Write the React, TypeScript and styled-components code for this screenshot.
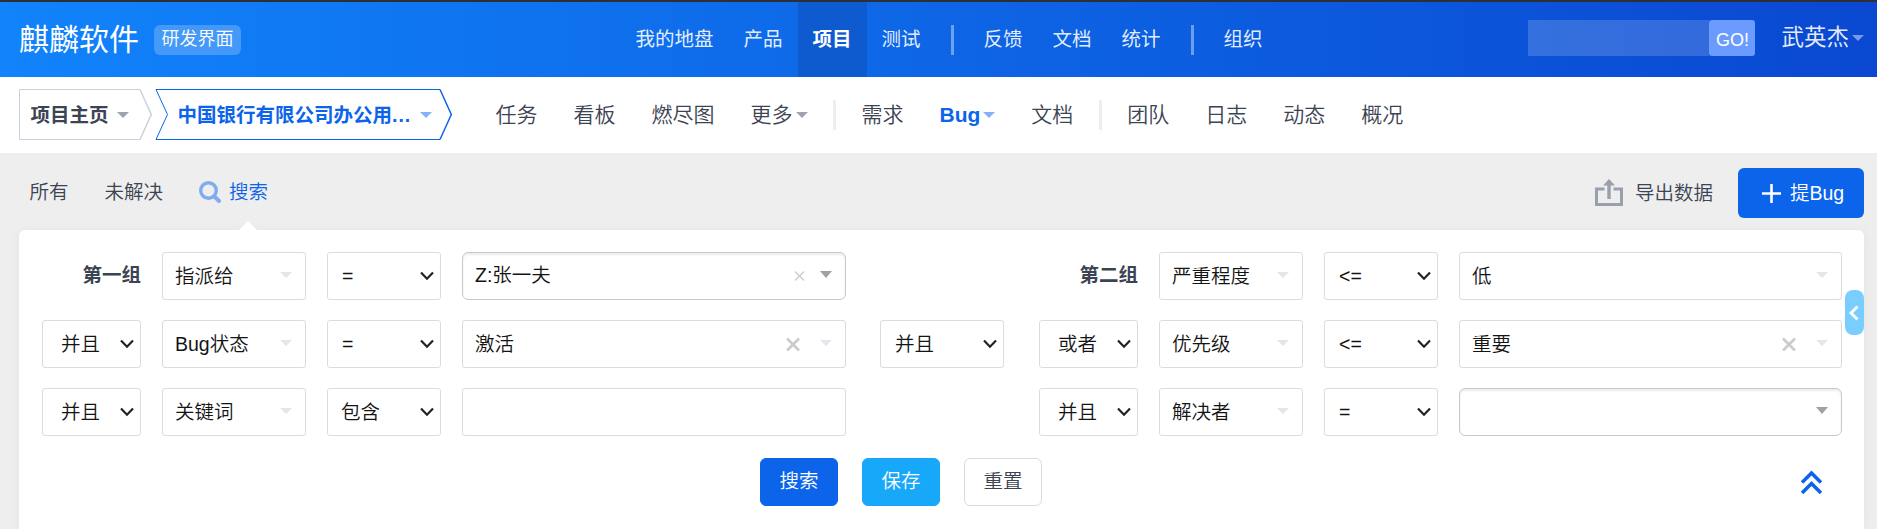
import React from "react";
import styled, { createGlobalStyle, css } from "styled-components";

const BLUE = "#0c64eb";

const GlobalStyle = createGlobalStyle`
  * { box-sizing: border-box; }
  body {
    margin: 0;
    background: #eee;
    font-family: "Liberation Sans", "Noto Sans CJK SC", sans-serif;
    font-size: 19.5px;
    font-weight: 350;
    line-height: 30px;
    color: #3c4353;
    overflow: hidden;
  }
  button, input { font: inherit; }
`;

const Page = styled.div`
  height: 529px;
  overflow: hidden;
  display: flex;
  flex-direction: column;
`;

const Header = styled.header`
  flex: none;
  height: 77px;
  border-top: 2px solid #2c2f36;
  background: linear-gradient(90deg, #1183fb 0%, #0a48d1 100%);
  display: grid;
  grid-template-columns: 620.5px 1fr auto;
  align-items: center;
  padding-right: 13px;
`;

const Brand = styled.div`
  display: flex;
  align-items: center;
  padding-left: 19px;
  gap: 15px;
`;

const BrandName = styled.span`
  font-size: 30px;
  font-weight: 400;
  line-height: 40px;
  color: #fff;
`;

const BrandTag = styled.span`
  width: 87px;
  height: 30px;
  border-radius: 6px;
  background: rgba(255, 255, 255, 0.22);
  color: #fff;
  font-size: 18px;
  line-height: 28px;
  text-align: center;
`;

const MainNav = styled.nav`
  display: flex;
  align-items: center;
  height: 75px;
`;

const MainNavItem = styled.a<{ $active?: boolean }>`
  height: 75px;
  line-height: 75px;
  padding: 0 15px;
  white-space: nowrap;
  color: ${(p) => (p.$active ? "#fff" : "rgba(255,255,255,0.9)")};
  font-weight: ${(p) => (p.$active ? 700 : 400)};
  background: ${(p) => (p.$active ? "#0d5bce" : "transparent")};
`;

const MainDivider = styled.span`
  width: 3px;
  height: 30px;
  margin: 0 15px;
  background: rgba(255, 255, 255, 0.4);
`;

const HeaderTools = styled.div`
  display: flex;
  align-items: center;
  padding-bottom: 3px;
`;

const QuickSearch = styled.input`
  width: 181px;
  height: 36px;
  border: 0;
  padding: 0 10px;
  background: rgba(255, 255, 255, 0.17);
  color: #fff;
`;

const GoButton = styled.button`
  width: 46px;
  height: 36px;
  border: 0;
  border-radius: 3px;
  padding: 3px 0 0;
  background: #6b9bff;
  color: #fff;
  font-size: 18px;
`;

const UserMenu = styled.span`
  display: flex;
  align-items: center;
  margin-left: 26px;
  gap: 3px;
  font-size: 22.5px;
  font-weight: 400;
  color: rgba(255, 255, 255, 0.9);
`;

const Caret = styled.i<{ $color: string; $large?: boolean }>`
  flex: none;
  width: 0;
  height: 0;
  border-style: solid;
  border-width: ${(p) => (p.$large ? "7px 6.5px 0" : "6px 6px 0")};
  border-color: ${(p) => p.$color} transparent transparent;
`;

const SubHeader = styled.div`
  flex: none;
  height: 76px;
  background: #fff;
  display: flex;
  align-items: center;
  padding: 0 0 1px 19px;
`;

const Crumb = styled.div<{ $width: number; $pad: number; $color: string }>`
  position: relative;
  width: ${(p) => p.$width}px;
  height: 51px;
  padding-left: ${(p) => p.$pad}px;
  display: flex;
  align-items: center;
  font-weight: 700;
  color: ${(p) => p.$color};
  white-space: nowrap;
`;

const CrumbShape = styled.svg`
  position: absolute;
  left: 0;
  top: 0;
`;

const CrumbText = styled.span<{ $width?: number; $gap: number }>`
  width: ${(p) => (p.$width ? `${p.$width}px` : "auto")};
  margin-right: ${(p) => p.$gap}px;
`;

const Ellipsis = styled.span`
  letter-spacing: 1px;
`;

const SubNav = styled.nav`
  display: flex;
  align-items: center;
  margin-left: 25.5px;
  font-size: 21px;
`;

const SubNavItem = styled.a<{ $active?: boolean }>`
  display: flex;
  align-items: center;
  gap: 3px;
  padding: 0 18px;
  white-space: nowrap;
  color: ${(p) => (p.$active ? BLUE : "#3c4353")};
  font-weight: ${(p) => (p.$active ? 700 : "inherit")};
`;

const SubDivider = styled.span`
  width: 3px;
  height: 30px;
  margin: 0 7.5px;
  background: #eee;
`;

const Toolbar = styled.div`
  flex: none;
  height: 77px;
  display: flex;
  align-items: center;
  padding: 3px 13px 0 29.5px;
`;

const Filter = styled.a<{ $active?: boolean }>`
  display: flex;
  align-items: center;
  gap: 8px;
  margin-right: 36px;
  padding-bottom: 3px;
  color: ${(p) => (p.$active ? BLUE : "#3c4353")};
`;

const ExportLink = styled.a`
  display: flex;
  align-items: center;
  gap: 12px;
  margin-left: auto;
  margin-right: 25px;
`;

const CreateButton = styled.button`
  width: 126px;
  height: 50px;
  border: 0;
  border-radius: 6px;
  padding: 0 0 0 24px;
  background: ${BLUE};
  color: #fff;
  display: flex;
  align-items: center;
  gap: 9px;
  white-space: nowrap;
`;

const Panel = styled.section`
  position: relative;
  flex: 1;
  margin: 0 13px 0 19px;
  padding: 22px 22px 0 23px;
  border-radius: 6px 6px 0 0;
  background: #fff;
  box-shadow: 0 1px 12px rgba(0, 0, 0, 0.05);
`;

const PanelPointer = styled.i`
  position: absolute;
  left: 220px;
  top: -9px;
  border-style: solid;
  border-width: 0 9px 9px;
  border-color: transparent transparent #fff;
`;

const DrawerTab = styled.button`
  position: absolute;
  right: 0;
  top: 60px;
  width: 19px;
  height: 45px;
  border: 0;
  padding: 1px 2px 0 0;
  border-radius: 8px;
  background: #79cdff;
  display: flex;
  align-items: center;
  justify-content: center;
`;

const Form = styled.div`
  display: grid;
  grid-template-columns: 804px 124px 803px;
  column-gap: 34px;
  align-items: center;
`;

const Group = styled.div<{ $valueWidth: number; $indent?: number }>`
  display: grid;
  grid-template-columns: 99px 144px 114px ${(p) => p.$valueWidth}px;
  grid-auto-rows: 48px;
  gap: 20px 21px;
  margin-left: ${(p) => p.$indent ?? 0}px;
`;

const GroupTitle = styled.div`
  font-weight: 700;
  text-align: right;
  line-height: 46px;
`;

const Field = styled.div<{ $pad: number; $end: number; $focus?: boolean }>`
  height: 48px;
  border: 1px solid #dcdcdc;
  border-radius: 3px;
  padding: 0 ${(p) => p.$end - 1}px 0 ${(p) => p.$pad - 1}px;
  display: flex;
  align-items: center;
  background: #fff;
  color: #141414;
  white-space: nowrap;
  ${(p) =>
    p.$focus &&
    css`
      border-color: #c8c8c8;
      border-radius: 6px;
      box-shadow: inset 0 2px 2px rgba(0, 0, 0, 0.08);
    `}
`;

const FieldText = styled.span<{ $raise?: boolean }>`
  flex: 1;
  padding-bottom: ${(p) => (p.$raise ? 3 : 0)}px;
`;

const ClearIcon = styled.svg<{ $gap: number }>`
  flex: none;
  margin-right: ${(p) => p.$gap}px;
`;

const CaretSlot = styled.span`
  display: flex;
  padding-bottom: 3px;
`;

const Actions = styled.div`
  position: relative;
  display: flex;
  justify-content: center;
  gap: 24px;
  margin-top: 22px;
  padding-right: 82px;
`;

const ActionButton = styled.button<{ $bg: string; $outlined?: boolean }>`
  width: 78px;
  height: 48px;
  border-radius: 6px;
  border: 1px solid ${(p) => (p.$outlined ? "#d8dbe3" : p.$bg)};
  padding: 0 0 3px;
  background: ${(p) => p.$bg};
  color: ${(p) => (p.$outlined ? "#3c4353" : "#fff")};
`;

const CollapseIcon = styled.svg`
  position: absolute;
  right: 20px;
  top: 12px;
`;

const Chevron = () => (
  <svg width="14" height="10" viewBox="0 0 14 10" fill="none">
    <path d="M1 1.5 L7 7.7 L13 1.5" stroke="#222" strokeWidth="2.2" />
  </svg>
);

const NativeSelect = ({ text, pad }: { text: string; pad: number }) => (
  <Field $pad={pad} $end={7}>
    <FieldText>{text}</FieldText>
    <Chevron />
  </Field>
);

type PickerProps = { text: string; clear?: boolean; focus?: boolean };

const Picker = ({ text, clear, focus }: PickerProps) => (
  <Field $pad={13} $end={14} $focus={focus}>
    <FieldText $raise={focus}>{text}</FieldText>
    {clear && focus && (
      <ClearIcon $gap={15} width="11" height="11" viewBox="0 0 11 11">
        <path d="M1 .5 L10 9.5 M10 .5 L1 9.5" stroke="#ccc" strokeWidth="1.4" />
      </ClearIcon>
    )}
    {clear && !focus && (
      <ClearIcon $gap={20} width="14" height="14" viewBox="0 0 14 14">
        <path d="M1 1.5 L13 13.5 M13 1.5 L1 13.5" stroke="#ccc" strokeWidth="2.8" />
      </ClearIcon>
    )}
    <CaretSlot>
      <Caret $color={focus ? "#a0a0a0" : "#e3e6ec"} $large={focus} />
    </CaretSlot>
  </Field>
);

export default function App() {
  return (
    <Page>
      <GlobalStyle />
      <Header>
        <Brand>
          <BrandName>麒麟软件</BrandName>
          <BrandTag>研发界面</BrandTag>
        </Brand>
        <MainNav>
          <MainNavItem>我的地盘</MainNavItem>
          <MainNavItem>产品</MainNavItem>
          <MainNavItem $active>项目</MainNavItem>
          <MainNavItem>测试</MainNavItem>
          <MainDivider />
          <MainNavItem>反馈</MainNavItem>
          <MainNavItem>文档</MainNavItem>
          <MainNavItem>统计</MainNavItem>
          <MainDivider />
          <MainNavItem>组织</MainNavItem>
        </MainNav>
        <HeaderTools>
          <QuickSearch />
          <GoButton>GO!</GoButton>
          <UserMenu>
            武英杰
            <Caret $color="rgba(255,255,255,0.45)" />
          </UserMenu>
        </HeaderTools>
      </Header>

      <SubHeader>
        <Crumb $width={136} $pad={11.5} $color="#3c4353">
          <CrumbShape width="134" height="51" viewBox="0 0 134 51" fill="none">
            <path d="M121 .5 H.5 V50.5 H121" stroke="#cbd0db" />
            <path d="M121 .5 L132.3 25.5 L121 50.5" stroke="#cbd0db" strokeWidth="1.5" />
          </CrumbShape>
          <CrumbText $gap={8}>项目主页</CrumbText>
          <Caret $color="#9ea3b0" />
        </Crumb>
        <Crumb $width={297} $pad={22.5} $color={BLUE}>
          <CrumbShape width="298" height="51" viewBox="0 0 298 51" fill="none">
            <path d="M285 .5 H1 L12.5 25.5 L1 50.5 H285" stroke={BLUE} />
            <path d="M285 .5 L296.3 25.5 L285 50.5" stroke={BLUE} strokeWidth="1.5" />
          </CrumbShape>
          <CrumbText $width={234} $gap={8}>
            中国银行有限公司办公用<Ellipsis>...</Ellipsis>
          </CrumbText>
          <Caret $color="#85b2f5" />
        </Crumb>
        <SubNav>
          <SubNavItem>任务</SubNavItem>
          <SubNavItem>看板</SubNavItem>
          <SubNavItem>燃尽图</SubNavItem>
          <SubNavItem>
            更多
            <Caret $color="#9ea3b0" />
          </SubNavItem>
          <SubDivider />
          <SubNavItem>需求</SubNavItem>
          <SubNavItem $active>
            Bug
            <Caret $color="#85b2f5" />
          </SubNavItem>
          <SubNavItem>文档</SubNavItem>
          <SubDivider />
          <SubNavItem>团队</SubNavItem>
          <SubNavItem>日志</SubNavItem>
          <SubNavItem>动态</SubNavItem>
          <SubNavItem>概况</SubNavItem>
        </SubNav>
      </SubHeader>

      <Toolbar>
        <Filter>所有</Filter>
        <Filter>未解决</Filter>
        <Filter $active>
          <svg width="22" height="22" viewBox="0 0 22 22" fill="none" stroke="#7fabef">
            <circle cx="9.5" cy="9.5" r="7.8" strokeWidth="3.4" />
            <path d="M15.3 15.3 L20 20" strokeWidth="4" strokeLinecap="round" />
          </svg>
          搜索
        </Filter>
        <ExportLink>
          <svg width="28" height="28" viewBox="0 0 28 28" fill="none">
            <path d="M9.5 10 H1.5 V25.5 H26.5 V10 H18.5" stroke="#98a0ab" strokeWidth="3" />
            <path d="M14 4 V20" stroke="#98a0ab" strokeWidth="3.4" />
            <path d="M14 0 L20 6.5 H8 Z" fill="#98a0ab" />
          </svg>
          导出数据
        </ExportLink>
        <CreateButton>
          <svg width="19" height="19" viewBox="0 0 19 19">
            <path d="M9.5 0 V19 M0 9.5 H19" stroke="#fff" strokeWidth="2.6" />
          </svg>
          提Bug
        </CreateButton>
      </Toolbar>

      <Panel>
        <PanelPointer />
        <Form>
          <Group $valueWidth={384}>
            <GroupTitle>第一组</GroupTitle>
            <Picker text="指派给" />
            <NativeSelect text="=" pad={15} />
            <Picker text="Z:张一夫" clear focus />
            <NativeSelect text="并且" pad={19} />
            <Picker text="Bug状态" />
            <NativeSelect text="=" pad={15} />
            <Picker text="激活" clear />
            <NativeSelect text="并且" pad={19} />
            <Picker text="关键词" />
            <NativeSelect text="包含" pad={14} />
            <Field $pad={13} $end={14} />
          </Group>
          <NativeSelect text="并且" pad={15} />
          <Group $valueWidth={383} $indent={1}>
            <GroupTitle>第二组</GroupTitle>
            <Picker text="严重程度" />
            <NativeSelect text="<=" pad={15} />
            <Picker text="低" />
            <NativeSelect text="或者" pad={19} />
            <Picker text="优先级" />
            <NativeSelect text="<=" pad={15} />
            <Picker text="重要" clear />
            <NativeSelect text="并且" pad={19} />
            <Picker text="解决者" />
            <NativeSelect text="=" pad={15} />
            <Picker text="" focus />
          </Group>
        </Form>
        <Actions>
          <ActionButton $bg={BLUE}>搜索</ActionButton>
          <ActionButton $bg="#17a8f9">保存</ActionButton>
          <ActionButton $bg="#fff" $outlined>重置</ActionButton>
          <CollapseIcon width="21" height="25" viewBox="0 0 21 25" fill="none">
            <path d="M1 12.5 L10.5 3 L20 12.5 M1 23 L10.5 13.5 L20 23" stroke={BLUE} strokeWidth="3.6" />
          </CollapseIcon>
        </Actions>
        <DrawerTab>
          <svg width="10" height="16" viewBox="0 0 10 16" fill="none">
            <path d="M8.5 1.5 L2 8 L8.5 14.5" stroke="#fff" strokeWidth="3" />
          </svg>
        </DrawerTab>
      </Panel>
    </Page>
  );
}
